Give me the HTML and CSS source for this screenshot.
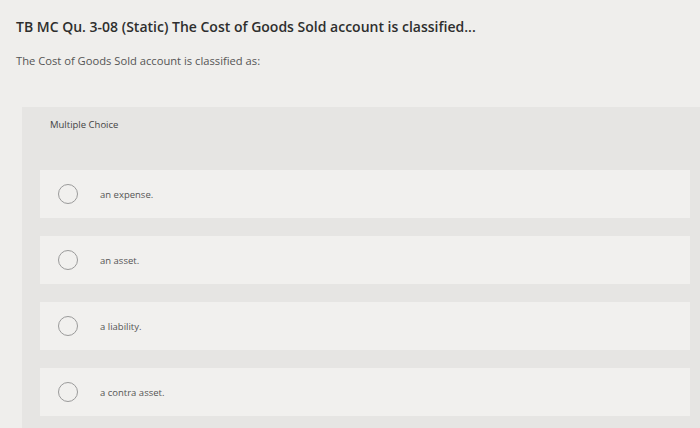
FILE: index.html
```html
<!DOCTYPE html>
<html lang="en">
<head>
	<meta charset="UTF-8">
	<link rel="stylesheet" href="styles.css">
	<title>TB MC Qu. 3-08 (Static)</title>
</head>
<body>
	<h1 class="title">TB MC Qu. 3-08 (Static) The Cost of Goods Sold account is classified...</h1>
	<p class="prompt">The Cost of Goods Sold account is classified as:</p>
	<div class="panel">
		<p class="label">Multiple Choice</p>
		<div class="choices">
			<div class="choice">
				<span class="radio"></span>
				<span class="text">an expense.</span>
			</div>
			<div class="choice">
				<span class="radio"></span>
				<span class="text">an asset.</span>
			</div>
			<div class="choice">
				<span class="radio"></span>
				<span class="text">a liability.</span>
			</div>
			<div class="choice">
				<span class="radio"></span>
				<span class="text">a contra asset.</span>
			</div>
		</div>
	</div>
</body>
</html>
```

FILE: styles.css
```css
body {
	margin: 0;
	padding: 0 0 0 16px;
	background: #efeeec;
	font-family: "Open Sans", "Liberation Sans", sans-serif;
	color: #3a3a3a;
	overflow: hidden;
}
.title {
	margin: 0;
	padding-top: 17px;
	font-size: 14px;
	font-weight: 600;
	line-height: 20px;
	color: #2e2e2e;
}
.prompt {
	margin: 0;
	padding-top: 16px;
	font-size: 11.2px;
	line-height: 16px;
	color: #555;
}
.panel {
	margin: 38px 0 0 6px;
	padding: 11px 10px 12px 18px;
	background: #e6e5e3;
}
.label {
	margin: 0 0 0 10px;
	font-size: 9.5px;
	line-height: 14px;
	color: #444;
}
.choices {
	display: flex;
	flex-direction: column;
	gap: 18px;
	margin-top: 38px;
}
.choice {
	display: flex;
	align-items: center;
	height: 48px;
	background: #f1f0ee;
}
.radio {
	width: 18px;
	height: 18px;
	margin-left: 18px;
	border: 1.5px solid #9a9a9a;
	border-radius: 50%;
}
.text {
	margin-left: 22px;
	font-size: 9.5px;
	color: #555;
}
```
